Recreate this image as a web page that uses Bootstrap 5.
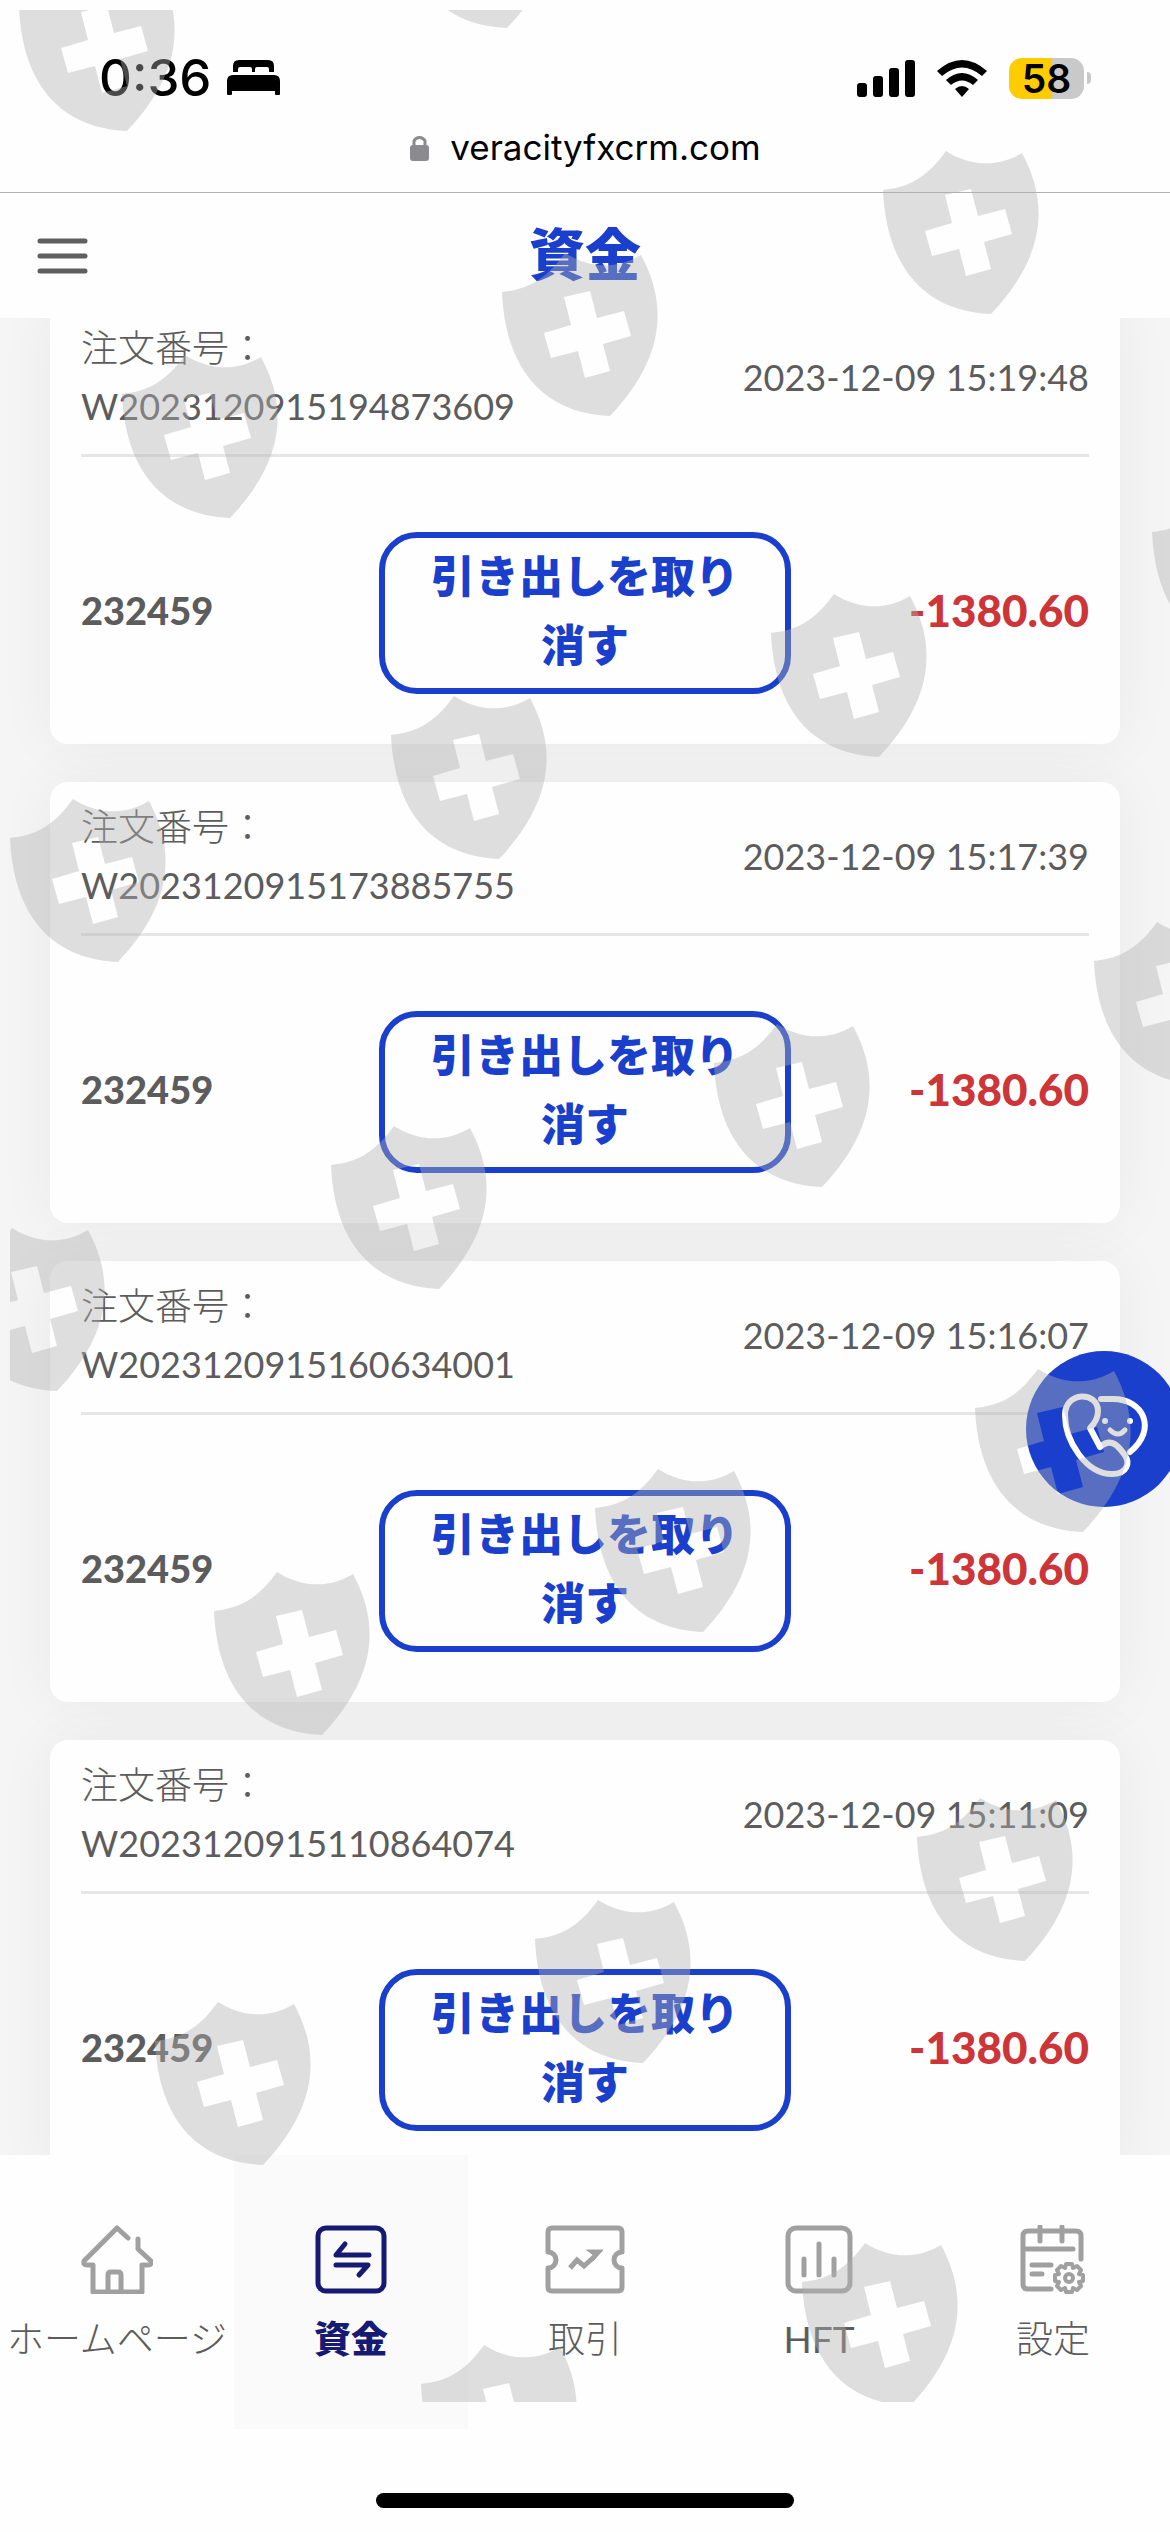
<!DOCTYPE html>
<html lang="ja">
<head>
<meta charset="utf-8">
<meta name="viewport" content="width=device-width, initial-scale=1">
<title>資金</title>
<link href="https://cdn.jsdelivr.net/npm/bootstrap@5.3.0/dist/css/bootstrap.min.css" rel="stylesheet">
<style>
  :root { --brand: #1a3fcc; --ink: #5c5c5c; --navy: #161a72; }
  body { font-family: Lato, "Noto Sans CJK JP", sans-serif; color: var(--ink); background: #fefefe; }
  .screen { overflow: hidden; }
  .ui-font { font-family: Inter, sans-serif; color: #000; }
  .status-row { padding: 48px 79px 0 99px; height: 108px; }
  .status-icons { gap: 22px; }
  .clock { font-size: 51px; font-weight: 500; line-height: 60px; }
  .battery { width: 75px; height: 41px; border-radius: 13px; font-size: 39px; font-weight: 600; line-height: 41px;
    background: linear-gradient(90deg, #fc0 58%, #c9c9c9 58%); }
  .battery-tip { width: 4px; height: 12px; border-radius: 0 4px 4px 0; background: #c9c9c9; margin-left: 3px; }
  .address { height: 84px; padding-bottom: 6px; font-size: 35px; gap: 20px; }
  .topbar { height: 126px; border-top: 1px solid #b0b0b0; padding: 0 37px; }
  .topbar h1 { font-size: 56px; line-height: 76px; padding-bottom: 4px; font-weight: 900; color: var(--brand); }
  .menu-btn, .side-space { width: 51px; }
  .feed { background: #f5f5f5; padding: 0 50px; overflow: hidden; flex: 1 1 0; min-height: 0; }
  .orders { margin-top: -15px; gap: 38px; }
  .order { border-radius: 18px; background: #fefefe; padding: 0 31px; box-shadow: 0 0 60px rgba(0,0,0,.05); }
  .order-head { border-bottom: 3px solid #e6e6e6; padding: 16px 0 19px; font-size: 36px; line-height: 58px; font-weight: 400; }
  .order-label { font-size: 37px; font-weight: 300; }
  .order-body { padding: 75px 0 50px; }
  .account, .amount { flex: 1 1 0; font-weight: 900; padding-bottom: 6px; }
  .account { font-size: 38px; }
  .amount { font-size: 44px; color: #cd3539; }
  .cancel-btn { width: 412px; border: 6px solid var(--brand); border-radius: 38px; padding: 4px 36px 8px;
    font-size: 44px; line-height: 69px; font-weight: 900; color: var(--brand); }
  .tabs { height: 274px; }
  .tab { flex: 1 1 0; padding-top: 70px; color: var(--ink); font-size: 37px; font-weight: 300; line-height: 50px; gap: 20px; white-space: nowrap; }
  .tab svg { color: #a0a0a0; }
  .tab.latin { font-weight: 400; }
  .tab.current { background: #fafafa; color: var(--navy); font-weight: 900; }
  .tab.current svg { color: var(--navy); }
  .home-zone { height: 103px; padding-top: 64px; }
  .home-bar { width: 418px; height: 15px; border-radius: 8px; background: #000; }
  .support { position: absolute; right: -12px; top: 1351px; width: 156px; height: 156px; border-radius: 50%; border: 0; background: var(--brand); padding: 0; }
  .watermark { position: absolute; top: 10px; left: 10px; right: 0; bottom: 130px; pointer-events: none; }
  .line-icon { fill: none; stroke: currentColor; stroke-width: 5; stroke-linecap: round; stroke-linejoin: round; }
</style>
<script src="https://cdn.jsdelivr.net/npm/bootstrap@5.3.0/dist/js/bootstrap.bundle.min.js"></script>
</head>
<body>
<div class="screen position-relative d-flex flex-column vh-100">

  <div class="ui-font">
    <div class="status-row d-flex justify-content-between align-items-center">
      <div class="d-flex align-items-center gap-3">
        <span class="clock">0:36</span>
        <svg width="53" height="36" viewBox="0 0 53 36" aria-hidden="true"><path d="M6 12V6q0-6 6-6h29q6 0 6 6v6h-5V9q0-2-2-2H30q-2 0-2 2v3h-3V9q0-2-2-2H13q-2 0-2 2v3zM0 21q0-6 6-6h41q6 0 6 6v13q0 1-1 1h-3q-1 0-1-1v-3H5v3q0 1-1 1H1q-1 0-1-1z"/></svg>
      </div>
      <div class="status-icons d-flex align-items-center">
        <svg width="58" height="37" viewBox="0 0 58 37" aria-hidden="true"><rect y="23" width="10" height="14" rx="3"/><rect x="16" y="16" width="10" height="21" rx="3"/><rect x="32" y="8" width="10" height="29" rx="3"/><rect x="48" width="10" height="37" rx="3"/></svg>
        <svg width="50" height="37" viewBox="0 0 50 37" aria-hidden="true"><path d="M25 37l-7-8q7-6 14 0zM9 20l5 5q11-9 22 0l5-5Q25 6 9 20zM0 11l5 5q20-17 40 0l5-5Q25-11 0 11z"/></svg>
        <div class="d-flex align-items-center"><span class="battery text-center">58</span><span class="battery-tip"></span></div>
      </div>
    </div>
    <div class="address d-flex justify-content-center align-items-center">
      <svg width="21" height="28" viewBox="0 0 21 28" aria-hidden="true"><rect x="1" y="12" width="19" height="16" rx="3" fill="#8a8a8f"/><path d="M5 13V8a6 6 0 0 1 11 0v5" fill="none" stroke="#8a8a8f" stroke-width="3"/></svg>
      <span>veracityfxcrm.com</span>
    </div>
  </div>

  <header class="topbar d-flex justify-content-between align-items-center">
    <button class="menu-btn btn p-0 border-0 d-flex" type="button" aria-label="メニュー">
      <svg width="51" height="36" viewBox="0 0 51 36" stroke="#5f5f5f" stroke-width="5" stroke-linecap="round"><path d="M3 3h45M3 18h45M3 33h45"/></svg>
    </button>
    <h1 class="m-0">資金</h1>
    <span class="side-space"></span>
  </header>

  <main class="feed">
    <div class="orders d-flex flex-column">
      <article class="order">
        <div class="order-head d-flex justify-content-between align-items-center">
          <div><div class="order-label">注文番号：</div><div>W2023120915194873609</div></div>
          <time>2023-12-09 15:19:48</time>
        </div>
        <div class="order-body d-flex align-items-center">
          <span class="account">232459</span>
          <button class="btn cancel-btn" type="button">引き出しを取り消す</button>
          <span class="amount text-end">-1380.60</span>
        </div>
      </article>
      <article class="order">
        <div class="order-head d-flex justify-content-between align-items-center">
          <div><div class="order-label">注文番号：</div><div>W2023120915173885755</div></div>
          <time>2023-12-09 15:17:39</time>
        </div>
        <div class="order-body d-flex align-items-center">
          <span class="account">232459</span>
          <button class="btn cancel-btn" type="button">引き出しを取り消す</button>
          <span class="amount text-end">-1380.60</span>
        </div>
      </article>
      <article class="order">
        <div class="order-head d-flex justify-content-between align-items-center">
          <div><div class="order-label">注文番号：</div><div>W2023120915160634001</div></div>
          <time>2023-12-09 15:16:07</time>
        </div>
        <div class="order-body d-flex align-items-center">
          <span class="account">232459</span>
          <button class="btn cancel-btn" type="button">引き出しを取り消す</button>
          <span class="amount text-end">-1380.60</span>
        </div>
      </article>
      <article class="order">
        <div class="order-head d-flex justify-content-between align-items-center">
          <div><div class="order-label">注文番号：</div><div>W2023120915110864074</div></div>
          <time>2023-12-09 15:11:09</time>
        </div>
        <div class="order-body d-flex align-items-center">
          <span class="account">232459</span>
          <button class="btn cancel-btn" type="button">引き出しを取り消す</button>
          <span class="amount text-end">-1380.60</span>
        </div>
      </article>
    </div>
  </main>

  <nav class="tabs d-flex">
    <a class="tab d-flex flex-column align-items-center text-decoration-none" href="#">
      <svg class="line-icon" width="72" height="69" viewBox="0 0 72 69"><path d="M47 13 36 3 3 36q-1 4 3 4h6v27h49V40h6q4 0 3-4L57 24V14M27 66V50q0-3 3-3h7q3 0 3 3v16"/></svg>
      <span>ホームページ</span>
    </a>
    <a class="tab current d-flex flex-column align-items-center text-decoration-none" href="#" aria-current="page">
      <svg class="line-icon" width="72" height="69" viewBox="0 0 72 69"><rect x="3" y="3" width="66" height="63" rx="8"/><path d="M54 30H21l9-11M21 40h32l-9 10"/></svg>
      <span>資金</span>
    </a>
    <a class="tab d-flex flex-column align-items-center text-decoration-none" href="#">
      <svg class="line-icon" width="80" height="69" viewBox="0 0 80 69"><path d="M3 27V7q0-4 4-4h66q4 0 4 4v20a8 8 0 0 0 0 16v19q0 4-4 4H7q-4 0-4-4V43a8 8 0 0 0 0-16"/><path d="M25 43l7-8 7 6 10-9" stroke-linecap="butt" stroke-linejoin="miter"/><path d="M42 25h16l-10 11v-6z" fill="currentColor" stroke-width="1"/></svg>
      <span>取引</span>
    </a>
    <a class="tab latin d-flex flex-column align-items-center text-decoration-none" href="#">
      <svg class="line-icon" width="68" height="69" viewBox="0 0 68 69"><rect x="3" y="3" width="62" height="63" rx="8"/><path d="M19 34v16M34 19v31M49 34v16"/></svg>
      <span>HFT</span>
    </a>
    <a class="tab d-flex flex-column align-items-center text-decoration-none" href="#">
      <svg class="line-icon" width="66" height="69" viewBox="0 0 66 69"><path d="M31 64H8q-5 0-5-5V11q0-5 5-5h48q5 0 5 5v23M3 24h50M20 2v14M42 2v14M12 40h19M12 49h10"/><g transform="translate(49 53)" stroke-width="4"><path d="M14-3V3L10 4 12 8 8 12 4 10 3 14H-3L-4 10-8 12-12 8-10 4-14 3V-3L-10-4-12-8-8-12-4-10-3-14H3L4-10 8-12 12-8 10-4z"/><circle r="4"/></g></svg>
      <span>設定</span>
    </a>
  </nav>
  <div class="home-zone d-flex justify-content-center"><div class="home-bar"></div></div>

  <button class="support" type="button" aria-label="サポート">
    <svg class="d-block" width="156" height="156" viewBox="0 0 156 156" fill="none" stroke="#fff" stroke-width="6" stroke-linecap="round" stroke-linejoin="round"><path d="M64 77C70 71 72 66 72 60C72 40 39 40 39 64C39 90 60 123 86 123C101 123 105 112 98 103C91 93 84 87 74 96ZM75 48H87C117 48 132 78 104 101"/><path d="M84 79q8 8 15 0" stroke-width="5"/><g fill="#fff" stroke="none"><circle cx="79" cy="70" r="3"/><circle cx="104" cy="70" r="3"/></g></svg>
  </button>

  <div class="watermark">
    <svg class="w-100 h-100 d-block" aria-hidden="true">
      <defs>
        <path id="shield" fill="#b1b1b1" fill-opacity=".41" fill-rule="evenodd" d="M0 39C28 36 45 25 63 0C85 14 112 18 139 2C166 52 163 105 108 163C38 160 3 112 0 39zM62 44L88 38L95 65L122 58L129 83L101 91L108 118L83 125L76 98L49 105L42 80L69 72z"/>
      </defs>
      <g transform="translate(-10 -10)">
        <use href="#shield" x="19" y="-32"/><use href="#shield" x="399" y="-135"/><use href="#shield" x="883" y="151"/>
        <use href="#shield" x="502" y="253"/><use href="#shield" x="122" y="355"/><use href="#shield" x="1152" y="493"/>
        <use href="#shield" x="771" y="594"/><use href="#shield" x="391" y="696"/><use href="#shield" x="10" y="799"/>
        <use href="#shield" x="1094" y="922"/><use href="#shield" x="714" y="1024"/><use href="#shield" x="331" y="1126"/>
        <use href="#shield" x="-51" y="1228"/><use href="#shield" x="975" y="1369"/><use href="#shield" x="595" y="1469"/>
        <use href="#shield" x="214" y="1572"/><use href="#shield" x="917" y="1798"/><use href="#shield" x="535" y="1900"/>
        <use href="#shield" x="155" y="2002"/><use href="#shield" x="802" y="2243"/><use href="#shield" x="421" y="2345"/>
      </g>
    </svg>
  </div>
</div>
</body>
</html>
